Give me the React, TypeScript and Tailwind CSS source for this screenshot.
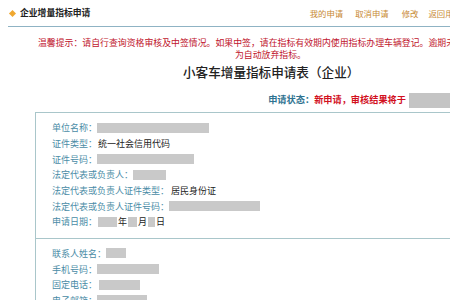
const Blank = ({ w, h = 'h-[10px]' }: { w: string; h?: string }) => (
  <span className={`inline-block ${w} ${h} bg-[#c9c9c9] align-middle`}></span>
);

const Row = ({ label, children }: { label: string; children?: React.ReactNode }) => (
  <div className="flex items-center h-[15.66px] whitespace-nowrap">
    <span className="text-[#4a8ca6]">{label}</span>
    {children}
  </div>
);

const App = () => {
  return (
    <div
      className="w-[450px] h-[300px] overflow-hidden bg-white text-[9px] leading-none"
      style={{ fontFamily: '"Noto Sans CJK SC", "Noto Sans", sans-serif' }}
    >
      {/* Header */}
      <div className="flex items-center h-[26px] pl-[10px] whitespace-nowrap">
        <span className="inline-block w-[5px] h-[5px] bg-[#f0a830] rotate-45 mr-[5px]"></span>
        <span className="font-bold text-[8.8px] text-[#222]">企业增量指标申请</span>
        <div className="ml-auto flex text-[#c88a34] text-[8.4px] -mr-[12px]">
          <span>我的申请</span>
          <span className="ml-[12px]">取消申请</span>
          <span className="ml-[13px]">修改</span>
          <span className="ml-[10px]">返回用户</span>
        </div>
      </div>
      <div className="ml-[8px] border-b border-[#8fb3c4]"></div>

      {/* Notice */}
      <div className="mt-[10px] text-[#c0142c] text-[8.9px] leading-[12px]">
        <div className="pl-[38px] w-[640px] whitespace-nowrap">
          温馨提示：请自行查询资格审核及中签情况。如果中签，请在指标有效期内使用指标办理车辆登记。逾期未使用的
        </div>
        <div className="pl-[235px] whitespace-nowrap">为自动放弃指标。</div>
      </div>

      {/* Title */}
      <div className="mt-[3px] pl-[183px] h-[16px] flex items-center text-[12.6px] font-medium text-[#222] whitespace-nowrap">
        小客车增量指标申请表（企业）
      </div>

      {/* Status */}
      <div className="mt-[12px] flex items-center justify-end h-[16px] font-bold text-[9.2px] whitespace-nowrap">
        <span className="text-[#2e7290]">申请状态：</span>
        <span className="text-[#d2101e]">新申请，审核结果将于</span>
        <span className="inline-block w-[41px] h-[15px] bg-[#c4c4c4] ml-[3px]"></span>
      </div>

      {/* Form */}
      <div className="mt-[4px] ml-[35px] border-t border-l border-[#a9c6ca]">
        <div className="pl-[16px] pt-[7px] pb-[8px] border-b border-[#a9c6ca]">
          <Row label="单位名称："><Blank w="w-[112px]" /></Row>
          <Row label="证件类型："><span className="ml-[1px] text-[#222]">统一社会信用代码</span></Row>
          <Row label="证件号码："><Blank w="w-[97px]" /></Row>
          <Row label="法定代表或负责人："><Blank w="w-[33px]" /></Row>
          <Row label="法定代表或负责人证件类型："><span className="ml-[2px] text-[#222]">居民身份证</span></Row>
          <Row label="法定代表或负责人证件号码："><Blank w="w-[91px]" /></Row>
          <Row label="申请日期：">
            <span className="ml-[1px]"></span>
            <Blank w="w-[19px]" />
            <span className="text-[#222] mx-[1px]">年</span>
            <Blank w="w-[9px]" />
            <span className="text-[#222] mx-[1px]">月</span>
            <Blank w="w-[7px]" />
            <span className="text-[#222] ml-[1px]">日</span>
          </Row>
        </div>
        <div className="pl-[16px] pt-[7px]">
          <Row label="联系人姓名："><Blank w="w-[20px]" /></Row>
          <Row label="手机号码："><Blank w="w-[62px]" /></Row>
          <Row label="固定电话："><span className="ml-[2px]"></span><Blank w="w-[41px]" /></Row>
          <Row label="电子邮箱："><Blank w="w-[50px]" /></Row>
        </div>
      </div>
    </div>
  );
};

export default App;
